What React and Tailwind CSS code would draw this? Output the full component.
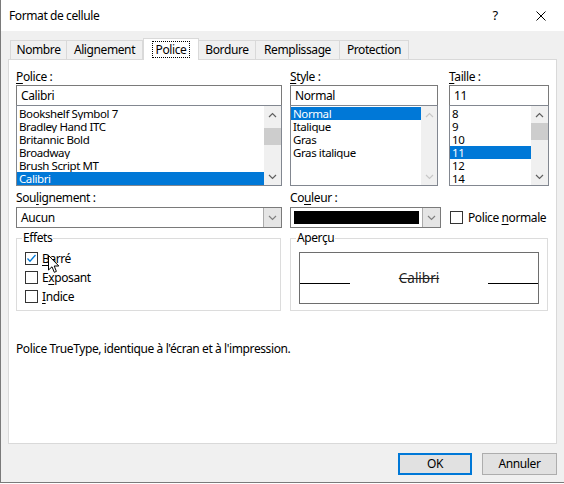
import React from 'react';

const font = { fontFamily: '"Noto Sans", "Open Sans", sans-serif' };

function U({ children }) {
  return <span className="underline underline-offset-2">{children}</span>;
}

function Chevron({ dir = 'down', color = '#606060' }) {
  return (
    <svg width="9" height="6" viewBox="0 0 9 6">
      <path
        d={dir === 'down' ? 'M1 1 L4.5 4.5 L8 1' : 'M1 5 L4.5 1.5 L8 5'}
        fill="none"
        stroke={color}
        strokeWidth="1.2"
      />
    </svg>
  );
}

function Scrollbar({ thumbTop, disabled }) {
  const c = disabled ? '#c8c8c8' : '#606060';
  return (
    <div className="flex flex-col w-[17px] h-full bg-[#f0f0f0]">
      <div className="h-[17px] flex items-center justify-center">
        <Chevron dir="up" color={c} />
      </div>
      <div className="flex-1 flex flex-col">
        {!disabled && (
          <div className="w-full h-[17px] bg-[#cdcdcd]" style={{ marginTop: thumbTop }} />
        )}
      </div>
      <div className="h-[17px] flex items-center justify-center">
        <Chevron dir="down" color={c} />
      </div>
    </div>
  );
}

function ListBox({ items, selected, thumbTop, disabled, selWidth }) {
  return (
    <div className="flex h-[81px] border border-[#828790] bg-white -mt-px">
      <div className="flex-1 flex flex-col pt-px">
        {items.map((it) => (
          <div
            key={it}
            className={`h-[13px] leading-[13px] pl-[2px] text-[11.5px] overflow-hidden ${
              it === selected ? 'bg-[#0078d7] text-white' : 'text-black'
            }`}
            style={it === selected && selWidth ? { width: selWidth } : undefined}
          >
            {it}
          </div>
        ))}
      </div>
      <Scrollbar thumbTop={thumbTop} disabled={disabled} />
    </div>
  );
}

function TextBox({ value }) {
  return (
    <div className="h-[21px] border border-[#7a7a7a] bg-white px-[4px] text-[12px] leading-[19px]">
      {value}
    </div>
  );
}

function Combo({ children }) {
  return (
    <div className="flex h-[21px] border border-[#7a7a7a] bg-white">
      <div className="flex-1 flex items-center">{children}</div>
      <div className="w-[18px] bg-[#e5e5e5] border-l border-[#acacac] flex items-center justify-center">
        <Chevron color="#808080" />
      </div>
    </div>
  );
}

function CheckBox({ checked }) {
  return (
    <div className="w-[13px] h-[13px] border border-[#333] bg-white flex items-center justify-center shrink-0">
      {checked && (
        <svg width="11" height="11" viewBox="0 0 11 11">
          <path d="M1.5 5.5 L4 8.2 L9.5 2" fill="none" stroke="#0078d7" strokeWidth="1.3" />
        </svg>
      )}
    </div>
  );
}

function Tab({ label, width, active }) {
  if (active) {
    return (
      <div
        className={`${width} h-[22px] -mb-px bg-white border border-b-0 border-[#d9d9d9] flex items-center justify-center z-10`}
      >
        <span className="px-[3px] outline outline-1 outline-dotted outline-black leading-[15px]">{label}</span>
      </div>
    );
  }
  return (
    <div
      className={`${width} h-[19px] bg-[#f0f0f0] border border-b-0 border-[#d9d9d9] -ml-px flex items-center justify-center`}
    >
      {label}
    </div>
  );
}

export default function App() {
  return (
    <div
      className="w-[564px] h-[483px] bg-[#f0f0f0] border-l border-b border-[#7a7a7a] text-[12px] tracking-[-0.4px] text-black flex flex-col"
      style={font}
    >
      {/* Title bar */}
      <div className="h-[31px] bg-white flex items-center shrink-0">
        <span className="ml-[8px] text-[12px] flex-1">Format de cellule</span>
        <span className="w-[46px] text-center text-[13px]">?</span>
        <span className="w-[46px] flex items-center justify-center">
          <svg width="10" height="10" viewBox="0 0 10 10">
            <path d="M0.5 0.5 L9.5 9.5 M9.5 0.5 L0.5 9.5" stroke="#000" strokeWidth="1" />
          </svg>
        </span>
      </div>

      <div className="px-[7px] pt-[7px] flex flex-col">
        {/* Tabs */}
        <div className="flex items-end ml-[3px]">
          <Tab label="Nombre" width="w-[57px]" />
          <Tab label="Alignement" width="w-[77px]" />
          <Tab label="Police" width="w-[56px]" active />
          <Tab label="Bordure" width="w-[58px]" />
          <Tab label="Remplissage" width="w-[85px]" />
          <Tab label="Protection" width="w-[70px]" />
        </div>

        {/* Panel */}
        <div className="h-[385px] w-[549px] bg-white border border-[#d9d9d9] flex flex-col pl-[7px]">
          {/* Row 1 */}
          <div className="flex mt-[8px]">
            <div className="w-[266px] flex flex-col">
              <div className="h-[17px] leading-[17px]">
                <U>P</U>olice :
              </div>
              <TextBox value="Calibri" />
              <ListBox
                items={['Bookshelf Symbol 7', 'Bradley Hand ITC', 'Britannic Bold', 'Broadway', 'Brush Script MT', 'Calibri']}
                selected="Calibri"
                thumbTop={5}
              />
            </div>
            <div className="w-[148px] ml-[8px] flex flex-col">
              <div className="h-[17px] leading-[17px]">
                <U>S</U>tyle :
              </div>
              <TextBox value="Normal" />
              <ListBox
                items={['Normal', 'Italique', 'Gras', 'Gras italique']}
                selected="Normal"
                disabled
                selWidth={130}
              />
            </div>
            <div className="w-[100px] ml-[11px] flex flex-col">
              <div className="h-[17px] leading-[17px]">
                <U>T</U>aille :
              </div>
              <TextBox value="11" />
              <ListBox items={['8', '9', '10', '11', '12', '14']} selected="11" thumbTop={0} />
            </div>
          </div>

          {/* Row 2 */}
          <div className="flex mt-[3px]">
            <div className="w-[266px] flex flex-col">
              <div className="h-[18px] leading-[18px]">
                Sou<U>l</U>ignement :
              </div>
              <Combo>
                <span className="pl-[4px]">Aucun</span>
              </Combo>
            </div>
            <div className="w-[151px] ml-[8px] flex flex-col">
              <div className="h-[18px] leading-[18px]">
                Co<U>u</U>leur :
              </div>
              <Combo>
                <div className="ml-[3px] w-[125px] h-[13px] bg-black" />
              </Combo>
            </div>
            <div className="ml-[9px] mt-[21px] flex items-center gap-[5px] h-[15px]">
              <CheckBox />
              <span>
                Police <U>n</U>ormale
              </span>
            </div>
          </div>

          {/* Row 3: group boxes */}
          <div className="flex mt-[9px]">
            <div className="w-[265px] h-[73px] border border-[#dcdcdc] mt-[1px] flex flex-col">
              <div className="-mt-[9px] ml-[5px] bg-white px-[1px] self-start leading-[16px]">Effets</div>
              <div className="flex flex-col pl-[8px] mt-[6px] gap-[6px]">
                <div className="flex items-center gap-[4px] h-[13px] relative">
                  <CheckBox checked />
                  <span>
                    <U>B</U>arré
                  </span>
                  <svg className="absolute left-[23px] top-[3px]" width="12" height="19" viewBox="0 0 12 19">
                    <path
                      d="M0.5 0.5 L0.5 15 L4 11.8 L6.3 17.3 L8.4 16.4 L6.2 11 L10.8 11 Z"
                      fill="#fff"
                      stroke="#000"
                      strokeWidth="1"
                      strokeLinejoin="round"
                    />
                  </svg>
                </div>
                <div className="flex items-center gap-[4px] h-[13px]">
                  <CheckBox />
                  <span>
                    E<U>x</U>posant
                  </span>
                </div>
                <div className="flex items-center gap-[4px] h-[13px]">
                  <CheckBox />
                  <span>
                    <U>I</U>ndice
                  </span>
                </div>
              </div>
            </div>
            <div className="w-[258px] h-[73px] ml-[9px] border border-[#dcdcdc] mt-[1px] flex flex-col">
              <div className="-mt-[9px] ml-[5px] bg-white px-[1px] self-start leading-[16px]">Aperçu</div>
              <div className="mx-[8px] mt-[6px] h-[52px] border border-[#6e6e6e] flex items-center">
                <div className="w-[50px] h-px bg-black mt-[10px]" />
                <div className="flex-1 text-center line-through text-[13.5px] tracking-normal text-[#222]">Calibri</div>
                <div className="w-[50px] h-px bg-black mt-[10px]" />
              </div>
            </div>
          </div>

          <div className="mt-[30px] leading-[16px]">
            Police TrueType, identique à l'écran et à l'impression.
          </div>
        </div>

        {/* Buttons */}
        <div className="flex justify-end gap-[10px] mt-[9px]">
          <button className="w-[74px] h-[22px] bg-[#e1e1e1] border-2 border-[#0078d7] text-[12px]">OK</button>
          <button className="w-[75px] h-[22px] bg-[#e1e1e1] border border-[#adadad] text-[12px]">Annuler</button>
        </div>
      </div>
    </div>
  );
}
